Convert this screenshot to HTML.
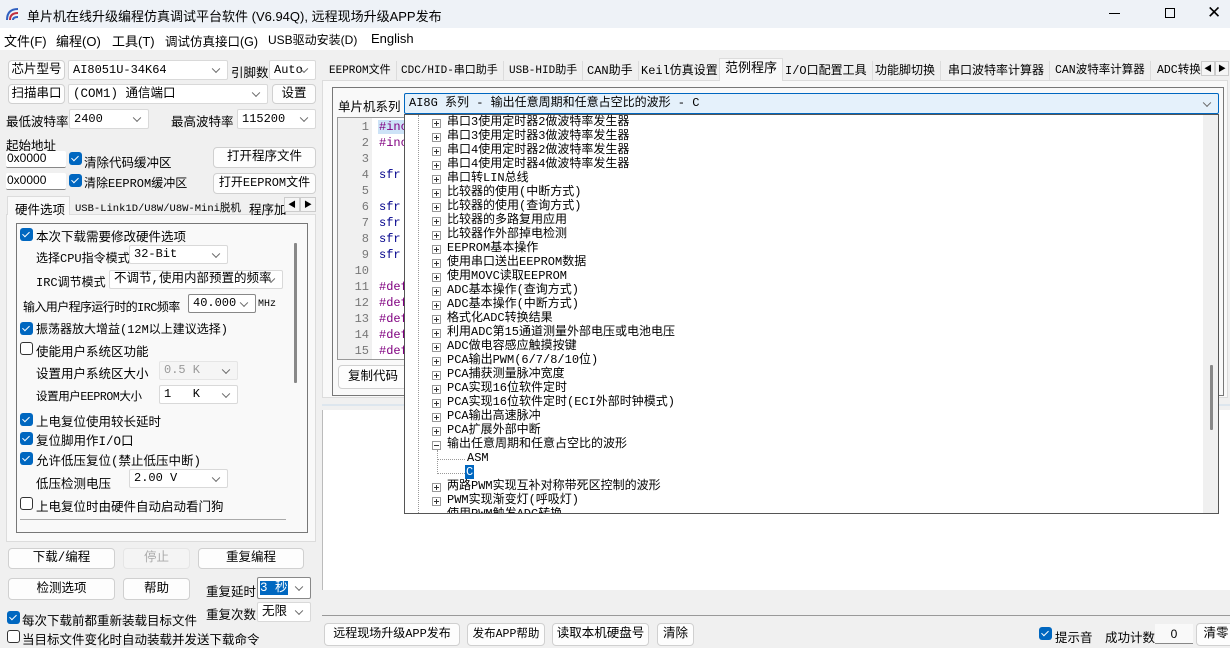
<!DOCTYPE html>
<html><head><meta charset="utf-8"><style>
*{box-sizing:border-box;margin:0;padding:0}
body{width:1230px;height:648px;overflow:hidden;background:#f0f0f0;font-family:"Liberation Sans","Noto Sans CJK SC",sans-serif;font-size:12px;color:#000;position:relative}
.a{position:absolute;white-space:nowrap}
.btn{position:absolute;background:#fdfdfd;border:1px solid #d0d0d0;border-radius:4px;text-align:center;font-size:12.5px;white-space:nowrap;font-family:"Liberation Mono","Noto Sans CJK SC",monospace}
.sel{position:absolute;background:#fff;border:1px solid #d9d9d9;border-radius:2px;font-family:"Liberation Mono","Noto Sans CJK SC",monospace;font-size:12px;padding-left:4px;white-space:nowrap;overflow:hidden}
.sel::after{content:"";position:absolute;right:8px;top:50%;width:5px;height:5px;border-right:1px solid #666;border-bottom:1px solid #666;transform:translateY(-70%) rotate(45deg)}
.nochev::after{display:none}
.cb{position:absolute;width:13px;height:13px;border-radius:3px;background:#0067c0}
.cb::after{content:"";position:absolute;left:4px;top:2px;width:3px;height:6px;border-right:1.5px solid #fff;border-bottom:1.5px solid #fff;transform:rotate(45deg)}
.ub{position:absolute;width:13px;height:13px;border-radius:3px;border:1px solid #333;background:#fff}
.t13{font-size:12.5px;font-family:"Liberation Mono","Noto Sans CJK SC",monospace}
.m{font-size:13px}
.tab{position:absolute;top:61px;height:20px;font-family:"Liberation Mono","Noto Sans CJK SC",monospace;font-size:12px;line-height:20px;padding:0 5px;border-right:1px solid #dcdcdc;white-space:nowrap}
.tr{position:absolute;left:447px;font-family:"Liberation Mono","Noto Sans CJK SC",monospace;font-size:12px;line-height:14px;white-space:nowrap}
.pl{position:absolute;left:432px;width:9px;height:9px;border:1px solid #999;background:#fff}
.pl::before{content:"";position:absolute;left:1px;top:3px;width:5px;height:1px;background:#333}
.pl.p::after{content:"";position:absolute;left:3px;top:1px;width:1px;height:5px;background:#333}
.ln{position:absolute;left:337px;width:32px;text-align:right;color:#777;font-family:"Liberation Mono",monospace;font-size:12px}
.cd{position:absolute;left:379px;font-family:"Liberation Mono",monospace;font-size:12px;color:#800080}
.cd.s{color:#00008b}
</style></head><body>
<!-- title -->
<div class="a" style="left:0;top:0;width:1230px;height:28px;background:#eef2f7"></div>
<svg class="a" style="left:6px;top:7px" width="14" height="14"><path d="M1 13 Q1 2 12 2" stroke="#3060c0" stroke-width="2" fill="none"/><path d="M4 13 Q4 6 12 6" stroke="#c03040" stroke-width="2" fill="none"/><path d="M7 13 Q7 10 12 10" stroke="#3060c0" stroke-width="2" fill="none"/></svg>
<div class="a" style="left:27px;top:6px;font-size:13px">单片机在线升级编程仿真调试平台软件 (V6.94Q), 远程现场升级APP发布</div>
<div class="a" style="left:1109px;top:13px;width:11px;height:1px;background:#000"></div>
<div class="a" style="left:1165px;top:8px;width:10px;height:10px;border:1px solid #000"></div>
<div class="a" style="left:1207px;top:3px;font-size:17px;font-weight:300">✕</div>
<!-- menu -->
<div class="a" style="left:0;top:28px;width:1230px;height:22px;background:#fff"></div>
<div class="a m" style="left:4px;top:31px">文件(F)</div>
<div class="a m" style="left:56px;top:31px">编程(O)</div>
<div class="a m" style="left:112px;top:31px">工具(T)</div>
<div class="a m" style="left:165px;top:31px;font-size:12.5px">调试仿真接口(G)</div>
<div class="a m" style="left:268px;top:31px;font-size:12px">USB驱动安装(D)</div>
<div class="a m" style="left:371px;top:31px">English</div>

<!-- left top -->
<div class="btn" style="left:8px;top:60px;width:57px;height:20px;line-height:18px">芯片型号</div>
<div class="sel" style="left:68px;top:60px;width:160px;height:20px;line-height:18px">AI8051U-34K64</div>
<div class="a t13" style="left:231px;top:62px">引脚数</div>
<div class="sel" style="left:269px;top:60px;width:47px;height:20px;line-height:18px">Auto</div>
<div class="btn" style="left:8px;top:84px;width:57px;height:20px;line-height:18px">扫描串口</div>
<div class="sel" style="left:68px;top:84px;width:200px;height:20px;line-height:18px;font-size:12.5px">(COM1) 通信端口</div>
<div class="btn" style="left:272px;top:84px;width:44px;height:20px;line-height:18px">设置</div>
<div class="a t13" style="left:6px;top:111px">最低波特率</div>
<div class="sel" style="left:69px;top:109px;width:80px;height:20px;line-height:18px">2400</div>
<div class="a t13" style="left:171px;top:111px">最高波特率</div>
<div class="sel" style="left:237px;top:109px;width:79px;height:20px;line-height:18px">115200</div>
<div class="a t13" style="left:6px;top:135px">起始地址</div>
<div class="sel nochev" style="left:6px;top:151px;width:60px;height:17px;line-height:15px;border:none;border-bottom:1px solid #888;padding-left:1px;font-family:'Liberation Sans',sans-serif">0x0000</div>
<div class="cb" style="left:69px;top:152px"></div>
<div class="a t13" style="left:84px;top:152px">清除代码缓冲区</div>
<div class="btn" style="left:213px;top:147px;width:103px;height:21px;line-height:19px">打开程序文件</div>
<div class="sel nochev" style="left:6px;top:173px;width:60px;height:17px;line-height:15px;border:none;border-bottom:1px solid #888;padding-left:1px;font-family:'Liberation Sans',sans-serif">0x0000</div>
<div class="cb" style="left:69px;top:174px"></div>
<div class="a t13" style="left:84px;top:174px;font-size:12px">清除EEPROM缓冲区</div>
<div class="btn" style="left:213px;top:173px;width:103px;height:21px;line-height:19px;font-size:12px">打开EEPROM文件</div>
<!-- left tabs -->
<div class="a" style="left:6px;top:214px;width:310px;height:328px;border:1px solid #dcdcdc;background:#f9f9f9"></div>
<div class="a" style="left:7px;top:196px;width:63px;height:19px;background:#f9f9f9;border:1px solid #dcdcdc;border-bottom:none"></div>
<div class="a t13" style="left:15px;top:199px">硬件选项</div>
<div class="a" style="left:75px;top:200px;font-family:'Liberation Mono','Noto Sans CJK SC',monospace;font-size:10.5px">USB-Link1D/U8W/U8W-Mini脱机</div>
<div class="a t13" style="left:249px;top:199px">程序加</div>
<div class="a" style="left:284px;top:197px;width:16px;height:15px;border:1px solid #ccc;background:#f5f5f5;font-size:8px;text-align:center;line-height:13px">◀</div>
<div class="a" style="left:300px;top:197px;width:16px;height:15px;border:1px solid #ccc;background:#f5f5f5;font-size:8px;text-align:center;line-height:13px">▶</div>
<div class="a" style="left:16px;top:223px;width:292px;height:310px;border:1px solid #777"></div>
<div class="a" style="left:294px;top:243px;width:3px;height:140px;background:#888;border-radius:1px"></div>
<div class="a" style="left:20px;top:519px;width:266px;height:1px;background:#aaa"></div>
<div class="cb" style="left:20px;top:228px"></div><div class="a t13" style="left:36px;top:226px">本次下载需要修改硬件选项</div>
<div class="a t13" style="left:36px;top:249px;font-size:12px">选择CPU指令模式</div><div class="sel" style="left:129px;top:245px;width:99px;height:19px;line-height:17px">32-Bit</div>
<div class="a t13" style="left:36px;top:273px;font-size:12px">IRC调节模式</div><div class="sel" style="left:109px;top:270px;width:174px;height:19px;line-height:17px;font-size:12.5px">不调节,使用内部预置的频率</div>
<div class="a t13" style="left:23px;top:298px;font-size:12px;letter-spacing:-0.6px">输入用户程序运行时的IRC频率</div><div class="sel" style="left:188px;top:294px;width:68px;height:19px;line-height:17px;border-color:#888">40.000</div><div class="a" style="left:258px;top:299px;font-size:10px;font-family:'Liberation Mono',monospace">MHz</div>
<div class="cb" style="left:20px;top:322px"></div><div class="a t13" style="left:36px;top:320px;font-size:12px">振荡器放大增益(12M以上建议选择)</div>
<div class="ub" style="left:20px;top:342px"></div><div class="a t13" style="left:36px;top:341px">使能用户系统区功能</div>
<div class="a t13" style="left:36px;top:363px">设置用户系统区大小</div><div class="sel" style="left:159px;top:361px;width:79px;height:19px;line-height:17px;background:#f5f5f5;color:#999;border-color:#e5e5e5">0.5 K</div>
<div class="a t13" style="left:36px;top:388px;font-size:11.5px;letter-spacing:-0.4px">设置用户EEPROM大小</div><div class="sel" style="left:159px;top:385px;width:79px;height:19px;line-height:17px">1&nbsp;&nbsp;&nbsp;K</div>
<div class="cb" style="left:20px;top:413px"></div><div class="a t13" style="left:36px;top:411px">上电复位使用较长延时</div>
<div class="cb" style="left:20px;top:432px"></div><div class="a t13" style="left:36px;top:430px">复位脚用作I/O口</div>
<div class="cb" style="left:20px;top:452px"></div><div class="a t13" style="left:36px;top:450px">允许低压复位(禁止低压中断)</div>
<div class="a t13" style="left:36px;top:473px">低压检测电压</div><div class="sel" style="left:129px;top:469px;width:99px;height:19px;line-height:17px">2.00 V</div>
<div class="ub" style="left:20px;top:497px"></div><div class="a t13" style="left:36px;top:496px">上电复位时由硬件自动启动看门狗</div>
<!-- left bottom -->
<div class="btn" style="left:8px;top:548px;width:107px;height:21px;line-height:19px">下载/编程</div>
<div class="btn" style="left:123px;top:548px;width:67px;height:21px;line-height:19px;background:#f4f4f4;color:#aaa;border-color:#e5e5e5">停止</div>
<div class="btn" style="left:198px;top:548px;width:106px;height:21px;line-height:19px">重复编程</div>
<div class="btn" style="left:8px;top:578px;width:107px;height:22px;line-height:20px">检测选项</div>
<div class="btn" style="left:123px;top:578px;width:67px;height:22px;line-height:20px">帮助</div>
<div class="a t13" style="left:206px;top:581px">重复延时</div>
<div class="sel" style="left:257px;top:577px;width:54px;height:22px;line-height:20px;border-color:#888;font-size:12.5px;padding-left:2px"><span style="background:#0067c0;color:#fff">3 秒</span></div>
<div class="cb" style="left:7px;top:611px"></div><div class="a t13" style="left:22px;top:610px">每次下载前都重新装载目标文件</div>
<div class="a t13" style="left:206px;top:604px">重复次数</div>
<div class="sel" style="left:257px;top:602px;width:54px;height:20px;line-height:18px;font-size:12.5px">无限</div>
<div class="ub" style="left:7px;top:630px"></div><div class="a t13" style="left:22px;top:629px">当目标文件变化时自动装载并发送下载命令</div>

<!-- right tabs -->
<div class="a" style="left:322px;top:80px;width:906px;height:318px;background:#f9f9f9;border:1px solid #dcdcdc"></div>
<div class="tab" style="left:324px;font-size:11px">EEPROM文件</div>
<div class="tab" style="left:396px;font-size:11px">CDC/HID-串口助手</div>
<div class="tab" style="left:504px;font-size:11px">USB-HID助手</div>
<div class="tab" style="left:582px">CAN助手</div>
<div class="tab" style="left:636px">Keil仿真设置</div>
<div class="tab" style="left:719px;top:58px;height:23px;background:#f9f9f9;border:1px solid #dcdcdc;border-bottom:none;font-size:13px">范例程序</div>
<div class="tab" style="left:780px">I/O口配置工具</div>
<div class="tab" style="left:870px">功能脚切换</div>
<div class="tab" style="left:943px">串口波特率计算器</div>
<div class="tab" style="left:1050px;font-size:11.5px">CAN波特率计算器</div>
<div class="tab" style="left:1152px;border:none;font-size:11.5px">ADC转换</div>
<div class="a" style="left:1201px;top:61px;width:14px;height:15px;border:1px solid #ccc;background:#f5f5f5;font-size:8px;text-align:center;line-height:13px">◀</div>
<div class="a" style="left:1215px;top:61px;width:14px;height:15px;border:1px solid #ccc;background:#f5f5f5;font-size:8px;text-align:center;line-height:13px">▶</div>
<div class="a" style="left:332px;top:87px;width:892px;height:309px;border:1px solid #777"></div>
<div class="a t13" style="left:338px;top:96px">单片机系列</div>
<div class="sel" style="left:404px;top:93px;width:815px;height:21px;line-height:19px;background:#e5f1fb;border-color:#0067c0">AI8G 系列 - 输出任意周期和任意占空比的波形 - C</div>
<!-- code -->
<div class="a" style="left:337px;top:117px;width:70px;height:243px;background:#fff;border:1px solid #999"></div>
<div class="a" style="left:338px;top:118px;width:34px;height:241px;background:#f0f0f0"></div>
<div class="a" style="left:378px;top:120px;width:30px;height:14px;background:#cde3f7"></div>
<div class="ln" style="top:120px">1</div><div class="ln" style="top:136px">2</div><div class="ln" style="top:152px">3</div><div class="ln" style="top:168px">4</div><div class="ln" style="top:184px">5</div><div class="ln" style="top:200px">6</div><div class="ln" style="top:216px">7</div><div class="ln" style="top:232px">8</div><div class="ln" style="top:248px">9</div><div class="ln" style="top:264px">10</div><div class="ln" style="top:280px">11</div><div class="ln" style="top:296px">12</div><div class="ln" style="top:312px">13</div><div class="ln" style="top:328px">14</div><div class="ln" style="top:344px">15</div>
<div class="cd" style="top:120px">#inc</div><div class="cd" style="top:136px">#inc</div>
<div class="cd s" style="top:168px">sfr</div><div class="cd s" style="top:200px">sfr</div><div class="cd s" style="top:216px">sfr</div><div class="cd s" style="top:232px">sfr</div><div class="cd s" style="top:248px">sfr</div>
<div class="cd" style="top:280px">#def</div><div class="cd" style="top:296px">#def</div><div class="cd" style="top:312px">#def</div><div class="cd" style="top:328px">#def</div><div class="cd" style="top:344px">#def</div>
<div class="btn" style="left:338px;top:365px;width:70px;height:24px;line-height:22px">复制代码</div>
<!-- log -->
<div class="a" style="left:322px;top:404px;width:908px;height:2px;background:#dde6ee"></div>
<div class="a" style="left:322px;top:410px;width:908px;height:180px;background:#fff;border-left:1px solid #bbb"></div>
<div class="a" style="left:322px;top:590px;width:908px;height:26px;background:#f0f0f0;border-bottom:1px solid #999"></div>
<div class="btn" style="left:324px;top:623px;width:136px;height:23px;line-height:21px;font-size:12px">远程现场升级APP发布</div>
<div class="btn" style="left:467px;top:623px;width:78px;height:23px;line-height:21px;font-size:11.5px">发布APP帮助</div>
<div class="btn" style="left:552px;top:623px;width:97px;height:23px;line-height:21px">读取本机硬盘号</div>
<div class="btn" style="left:657px;top:623px;width:37px;height:23px;line-height:21px">清除</div>
<div class="cb" style="left:1039px;top:627px"></div><div class="a t13" style="left:1055px;top:627px">提示音</div>
<div class="a t13" style="left:1105px;top:627px">成功计数</div>
<div class="a" style="left:1155px;top:624px;width:38px;height:20px;border-bottom:1px solid #888;background:#f9f9f9;text-align:center;line-height:20px;font-size:12px">0</div>
<div class="btn" style="left:1196px;top:623px;width:40px;height:23px;line-height:21px">清零</div>

<!-- dropdown list -->
<div class="a" style="left:404px;top:114px;width:815px;height:400px;background:#fff;border:1px solid #555;overflow:hidden">
<div class="a" style="left:13px;top:0;width:0;height:400px;border-left:1px dotted #999"></div>
<div class="a" style="left:32px;top:335px;width:0;height:24px;border-left:1px dotted #999"></div>
<div class="a" style="left:33px;top:344px;width:27px;height:0;border-top:1px dotted #999"></div>
<div class="a" style="left:33px;top:358px;width:27px;height:0;border-top:1px dotted #999"></div>
<div class="a" style="left:798px;top:0;width:16px;height:398px;background:#f0f0f0"></div>
<div class="a" style="left:805px;top:250px;width:3px;height:65px;background:#888;border-radius:1px"></div>
</div>
<div class="pl p" style="top:119px"></div><div class="tr" style="top:115px">串口3使用定时器2做波特率发生器</div>
<div class="pl p" style="top:133px"></div><div class="tr" style="top:129px">串口3使用定时器3做波特率发生器</div>
<div class="pl p" style="top:147px"></div><div class="tr" style="top:143px">串口4使用定时器2做波特率发生器</div>
<div class="pl p" style="top:161px"></div><div class="tr" style="top:157px">串口4使用定时器4做波特率发生器</div>
<div class="pl p" style="top:175px"></div><div class="tr" style="top:171px">串口转LIN总线</div>
<div class="pl p" style="top:189px"></div><div class="tr" style="top:185px">比较器的使用(中断方式)</div>
<div class="pl p" style="top:203px"></div><div class="tr" style="top:199px">比较器的使用(查询方式)</div>
<div class="pl p" style="top:217px"></div><div class="tr" style="top:213px">比较器的多路复用应用</div>
<div class="pl p" style="top:231px"></div><div class="tr" style="top:227px">比较器作外部掉电检测</div>
<div class="pl p" style="top:245px"></div><div class="tr" style="top:241px">EEPROM基本操作</div>
<div class="pl p" style="top:259px"></div><div class="tr" style="top:255px">使用串口送出EEPROM数据</div>
<div class="pl p" style="top:273px"></div><div class="tr" style="top:269px">使用MOVC读取EEPROM</div>
<div class="pl p" style="top:287px"></div><div class="tr" style="top:283px">ADC基本操作(查询方式)</div>
<div class="pl p" style="top:301px"></div><div class="tr" style="top:297px">ADC基本操作(中断方式)</div>
<div class="pl p" style="top:315px"></div><div class="tr" style="top:311px">格式化ADC转换结果</div>
<div class="pl p" style="top:329px"></div><div class="tr" style="top:325px">利用ADC第15通道测量外部电压或电池电压</div>
<div class="pl p" style="top:343px"></div><div class="tr" style="top:339px">ADC做电容感应触摸按键</div>
<div class="pl p" style="top:357px"></div><div class="tr" style="top:353px">PCA输出PWM(6/7/8/10位)</div>
<div class="pl p" style="top:371px"></div><div class="tr" style="top:367px">PCA捕获测量脉冲宽度</div>
<div class="pl p" style="top:385px"></div><div class="tr" style="top:381px">PCA实现16位软件定时</div>
<div class="pl p" style="top:399px"></div><div class="tr" style="top:395px">PCA实现16位软件定时(ECI外部时钟模式)</div>
<div class="pl p" style="top:413px"></div><div class="tr" style="top:409px">PCA输出高速脉冲</div>
<div class="pl p" style="top:427px"></div><div class="tr" style="top:423px">PCA扩展外部中断</div>
<div class="pl" style="top:441px"></div><div class="tr" style="top:437px">输出任意周期和任意占空比的波形</div>
<div class="tr" style="top:451px;left:467px">ASM</div>
<div class="tr" style="top:465px;left:465px;background:#0067c0;color:#fff;padding:0 1px">C</div>
<div class="pl p" style="top:483px"></div><div class="tr" style="top:479px">两路PWM实现互补对称带死区控制的波形</div>
<div class="pl p" style="top:497px"></div><div class="tr" style="top:493px">PWM实现渐变灯(呼吸灯)</div>
<div class="a" style="left:405px;top:507px;width:797px;height:6px;overflow:hidden"><div class="tr" style="left:42px;top:0px">使用PWM触发ADC转换</div></div>
</body></html>
